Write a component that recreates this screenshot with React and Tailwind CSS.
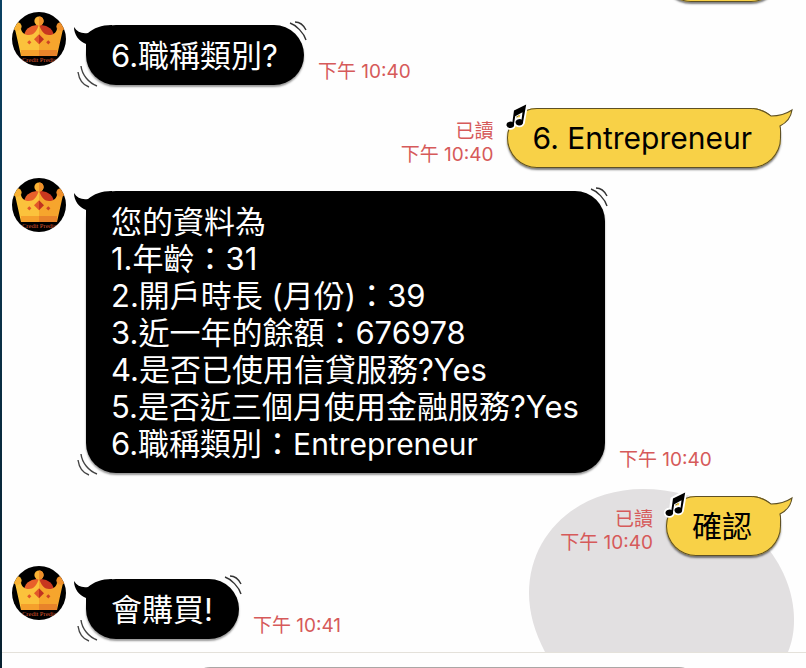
import React from "react";

function Avatar() {
  return (
    <svg viewBox="0 0 54 54" className="block h-[54px] w-[54px] shrink-0 rounded-full bg-black" aria-hidden="true">
      <path d="M12 24 C13 15 21 13 27 13 V30 H12Z" fill="#e8602a" />
      <path d="M27 13 C33 13 41 15 42 24 V30 H27Z" fill="#c8371f" />
      <path d="M27 12 C25 20 21 23 17 23 C13 23 10 21 9 17 L3 17 L9 44 H27Z" fill="#fbc23c" />
      <path d="M27 12 C29 20 33 23 37 23 C41 23 44 21 45 17 L51 17 L45 44 H27Z" fill="#f6a52d" />
      <path d="M9 38 H27 V44 H9Z" fill="#f5a02c" />
      <path d="M27 38 H45 V44 H27Z" fill="#e8832a" />
      <circle cx="5.3" cy="14.5" r="4.3" fill="#f9b233" />
      <circle cx="48.7" cy="14.5" r="4.3" fill="#f0902a" />
      <circle cx="27" cy="9" r="4.6" fill="#fbb335" />
      <path d="M27 4.4 A4.6 4.6 0 0 1 27 13.6Z" fill="#f0902a" />
      <path d="M27 22.3 V32.3 L22 27.3Z" fill="#e2582a" />
      <path d="M27 22.3 V32.3 L32 27.3Z" fill="#c03120" />
      <path d="M17.3 28.2 L19.4 30.3 L17.3 32.4 L15.2 30.3Z" fill="#e2582a" />
      <path d="M36.3 28.2 L38.4 30.3 L36.3 32.4 L34.2 30.3Z" fill="#cc4424" />
      <text x="10" y="50" fontSize="6.5" fill="#d9572f" className="font-['Liberation_Serif',serif]">
        Credit Predict
      </text>
    </svg>
  );
}

function Incoming({ lines, time }) {
  return (
    <div className="mt-[10px] flex items-start pl-[10px] first:mt-0">
      <Avatar />
      <div className="ml-5 mt-[13px] flex items-end gap-[14px]">
        <div className="relative rounded-[30px] bg-black pb-[11px] pl-[25px] pr-[26px] pt-3 text-[31px] leading-[37px] text-white shadow-[0_2px_2px_rgba(0,0,0,0.4)]">
          <svg className="absolute left-0 top-0 h-[30px] w-[30px] overflow-visible" viewBox="0 0 30 30" aria-hidden="true">
            <path d="M-12 2 C-9 7 -4 9 2 8 C8 3 15 0 26 0 L30 30 H0 V19 C-7 16 -12 10 -12 2Z" fill="#000" />
          </svg>
          <svg
            className="absolute right-0 top-0 h-px w-px overflow-visible"
            fill="none"
            stroke="#333"
            strokeWidth="1.4"
            aria-hidden="true"
          >
            <path d="M-13 -2 C-7 0 1 8 3 15 M-8 -3 C-3 -3 1 1 3 5" />
          </svg>
          <svg
            className="absolute bottom-0 left-0 h-px w-px overflow-visible"
            fill="none"
            stroke="#444"
            strokeWidth="1.4"
            aria-hidden="true"
          >
            <path d="M-5 -18 C-4 -9 3 -1 11 2 M-8 -12 C-7 -5 -3 1 3 3" />
          </svg>
          <div className="relative">
            {lines.map((line, index) => (
              <p key={index} className="whitespace-nowrap">
                {line}
              </p>
            ))}
          </div>
        </div>
        <time className="whitespace-nowrap pb-[2px] text-[19px] leading-[23px] text-[#d65a5a]">{time}</time>
      </div>
    </div>
  );
}

function MusicNote() {
  return (
    <svg className="absolute left-0 top-0 h-[24px] w-[24px] overflow-visible" viewBox="0 0 24 24" aria-hidden="true">
      <g fill="#fff" stroke="#fff" strokeWidth="4" strokeLinejoin="round">
        <ellipse cx="3.3" cy="16.8" rx="3.6" ry="3" />
        <ellipse cx="12.3" cy="14.3" rx="3.6" ry="3" />
        <path d="M6.3 3 L19 -4 L16 14 H14 L16 3 L8 7 L6.5 16 H5Z" />
      </g>
      <g fill="#000">
        <ellipse cx="3.3" cy="16.8" rx="3.8" ry="3.2" transform="rotate(-12 3.3 16.8)" />
        <ellipse cx="12.3" cy="14.3" rx="3.8" ry="3.2" transform="rotate(-12 12.3 14.3)" />
        <path d="M7 2.6 L19.2 -3.5 L16 14.5 H14.2 L15.5 4.2 L8.2 8.2 L6.8 17 H5Z" />
      </g>
    </svg>
  );
}

function Outgoing({ text, time }) {
  return (
    <div className="mt-[23px] flex items-end justify-end gap-[13px] pr-[25px]">
      <div className="whitespace-nowrap pb-[2px] text-right text-[19px] leading-[23px] text-[#d65a5a]">
        <p>已讀</p>
        <time className="block">{time}</time>
      </div>
      <div className="relative rounded-[30px] bg-[#f8d147] pb-[11px] pl-[26px] pr-[29px] pt-3 text-[30px] leading-[37px] text-black shadow-[inset_0_0_0_1px_#5e5024,0_2px_2px_rgba(0,0,0,0.5)]">
        <svg className="absolute right-0 top-0 h-px w-px overflow-visible" aria-hidden="true">
          <path d="M-27 0.5 C-18 1 -13 5 -9 8 C-1 8 6 6 12 2 C11 9 6 15 0 18 C1 21 0.5 25 0.5 30 L-27 30Z" fill="#f8d147" />
          <path
            d="M-27 0.5 C-18 1 -13 5 -9 8 C-1 8 6 6 12 2 C11 9 6 15 0 18 C1 21 0.5 25 0.5 30"
            fill="none"
            stroke="#5e5024"
            strokeWidth="1.1"
          />
        </svg>
        <MusicNote />
        <p className="relative whitespace-nowrap">{text}</p>
      </div>
    </div>
  );
}

export default function App() {
  return (
    <div className="flex min-h-screen w-full overflow-hidden bg-[#fefefe] font-['Inter','Noto_Sans_CJK_TC',sans-serif] font-normal">
      <div className="w-[2px] shrink-0 bg-linear-to-b from-[#0b4163] via-[#0a3046] to-[#07202f]" />
      <main className="flex min-w-0 flex-1 flex-col">
        <section className="relative overflow-hidden pb-[13px]">
          <svg className="absolute bottom-0 right-3 h-[163px] w-[265px]" viewBox="529 489 265 163" aria-hidden="true">
            <path
              d="M545 652 C535 633 529 613 529 593 C529 533 579 489 643 489 C725 489 794 551 794 620 C794 632 792 642 788 652Z"
              fill="#e2e0e1"
            />
          </svg>
          <div className="relative">
            <div className="flex h-3 items-start justify-end pr-[25px]">
              <div className="h-[2px] w-[120px]">
                <div className="relative -top-[58px] h-[60px] rounded-[30px] bg-[#f8d147] shadow-[inset_0_0_0_1px_#5e5024,0_2px_2px_rgba(0,0,0,0.5)]" />
              </div>
            </div>
            <div>
              <Incoming lines={["6.職稱類別?"]} time="下午 10:40" />
              <Outgoing text="6. Entrepreneur" time="下午 10:40" />
              <Incoming
                lines={[
                  "您的資料為",
                  "1.年齡：31",
                  "2.開戶時長 (月份)：39",
                  "3.近一年的餘額：676978",
                  "4.是否已使用信貸服務?Yes",
                  "5.是否近三個月使用金融服務?Yes",
                  <>
                    6.職稱類別：<span className="text-[30px] leading-none">Entrepreneur</span>
                  </>,
                ]}
                time="下午 10:40"
              />
              <Outgoing text="確認" time="下午 10:40" />
              <Incoming lines={["會購買!"]} time="下午 10:41" />
            </div>
          </div>
        </section>
        <footer className="h-4 overflow-hidden border-t border-[#e4e1da] bg-[#fefefe] pl-[188px] pr-[107px] pt-[14px]">
          <input
            type="text"
            aria-label="訊息"
            className="block h-10 w-full rounded-full border border-[#aaa6a5] bg-[#f3f2f2] px-5 outline-none"
          />
        </footer>
      </main>
    </div>
  );
}
